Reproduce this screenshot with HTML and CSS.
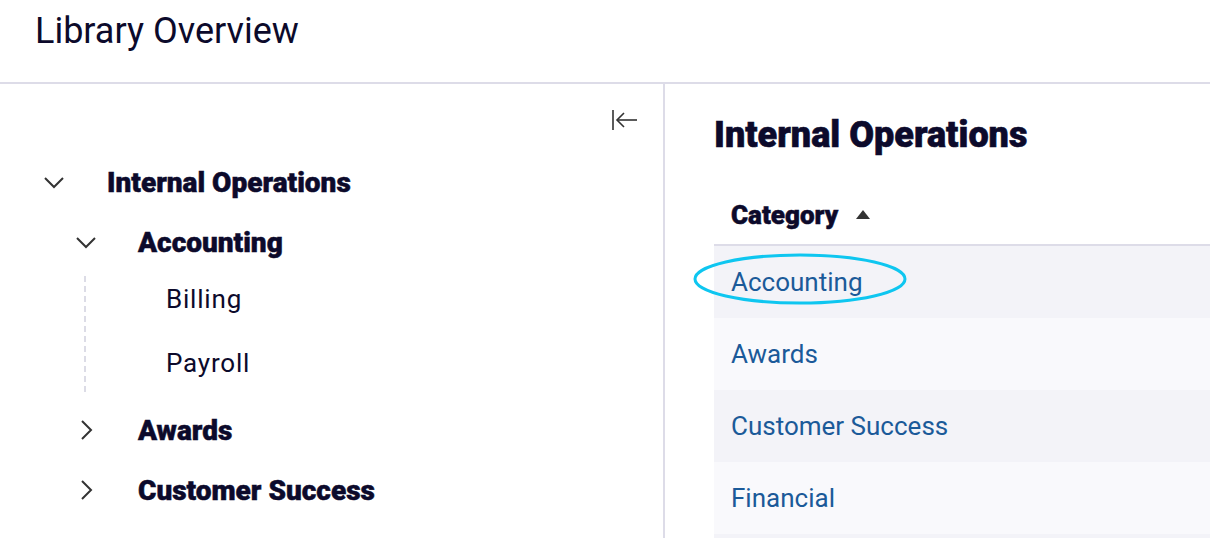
FILE: index.html
```html
<!DOCTYPE html>
<html lang="en">
<head>
  <meta charset="UTF-8" />
  <meta name="viewport" content="width=device-width, initial-scale=1.0" />
  <title>Library Overview</title>
  <link rel="stylesheet" href="styles.css">
</head>
<body>

<header class="page-header">
  <h1>Library Overview</h1>
</header>

<main class="layout">
  <aside class="sidebar">
    <div class="sidebar-tools">
      <button class="icon-btn" title="Collapse">
        <svg width="28" height="24" viewBox="0 0 28 24" fill="none" stroke="#333" stroke-width="1.6">
          <path d="M2 2v20" />
          <path d="M26 12H6" />
          <path d="M13 5l-7 7 7 7" />
        </svg>
      </button>
    </div>

    <ul class="tree">
      <li>
        <div class="tree-row level-0">
          <span class="chevron">
            <svg width="24" height="24" viewBox="0 0 24 24" fill="none" stroke="#333" stroke-width="2"><path d="M3 8l9 9 9-9" /></svg>
          </span>
          <span class="tree-label">Internal Operations</span>
        </div>
        <ul class="tree-children">
          <li>
            <div class="tree-row">
              <span class="chevron">
                <svg width="24" height="24" viewBox="0 0 24 24" fill="none" stroke="#333" stroke-width="2"><path d="M3 8l9 9 9-9" /></svg>
              </span>
              <span class="tree-label">Accounting</span>
            </div>
            <ul class="tree-leaves">
              <li class="leaf">Billing</li>
              <li class="leaf">Payroll</li>
            </ul>
          </li>
          <li>
            <div class="tree-row">
              <span class="chevron">
                <svg width="24" height="24" viewBox="0 0 24 24" fill="none" stroke="#333" stroke-width="2"><path d="M8 3l9 9-9 9" /></svg>
              </span>
              <span class="tree-label">Awards</span>
            </div>
          </li>
          <li>
            <div class="tree-row">
              <span class="chevron">
                <svg width="24" height="24" viewBox="0 0 24 24" fill="none" stroke="#333" stroke-width="2"><path d="M8 3l9 9-9 9" /></svg>
              </span>
              <span class="tree-label">Customer Success</span>
            </div>
          </li>
        </ul>
      </li>
    </ul>
  </aside>

  <section class="content">
    <h2>Internal Operations</h2>
    <div class="table">
      <div class="table-head">
        <span>Category</span>
        <span class="sort-arrow"></span>
      </div>
      <div class="table-row"><a href="#">Accounting</a></div>
      <div class="table-row"><a href="#">Awards</a></div>
      <div class="table-row"><a href="#">Customer Success</a></div>
      <div class="table-row"><a href="#">Financial</a></div>
      <div class="table-row"></div>

      <!-- annotation circle -->
      <svg class="highlight" width="216" height="56" viewBox="0 0 216 56">
        <ellipse cx="108" cy="28" rx="105" ry="24" fill="none" stroke="#0ec6f0" stroke-width="3" />
      </svg>
    </div>
  </section>
</main>

</body>
</html>
```

FILE: styles.css
```css
:root {
  --ink: #0c0a2b;
  --link: #1b5a99;
  --line: #dddce8;
  --row-a: #f3f3f8;
  --row-b: #f9f9fc;
}

* {
  margin: 0;
  padding: 0;
  box-sizing: border-box;
}

body {
  font-family: Roboto, "Liberation Sans", sans-serif;
  color: var(--ink);
  background: #fff;
  overflow: hidden;
}

.page-header {
  height: 84px;
  border-bottom: 2px solid var(--line);
  padding: 10px 35px 0;
}

.page-header h1 {
  font-size: 36px;
  font-weight: 400;
  line-height: 42px;
}

.layout {
  display: flex;
  height: 454px;
}

.sidebar {
  width: 665px;
  flex-shrink: 0;
  border-right: 2px solid var(--line);
  padding-top: 24px;
}

.sidebar-tools {
  display: flex;
  justify-content: flex-end;
  padding-right: 24px;
  margin-bottom: 20px;
}

.icon-btn {
  border: none;
  background: none;
  width: 28px;
  height: 24px;
  display: flex;
  cursor: pointer;
}

.tree {
  list-style: none;
  padding-left: 42px;
}

.tree ul {
  list-style: none;
}

.tree-row {
  display: flex;
  align-items: center;
  height: 60px;
  gap: 41px;
}

.chevron {
  width: 24px;
  height: 24px;
  display: flex;
}

.tree-label {
  font-size: 28px;
  font-weight: 900;
  -webkit-text-stroke: 0.5px var(--ink);
}

.tree-children {
  padding-left: 32px;
}

.tree-children .tree-row {
  gap: 40px;
}

.tree-leaves {
  margin: -5px 0 5px;
  padding: 9px 0 0 92px;
  background: repeating-linear-gradient(to bottom, #dcdce6 0 6px, transparent 6px 10px) 10px 9px / 2px 127px no-repeat;
}

.leaf {
  height: 64px;
  display: flex;
  align-items: center;
  font-size: 26px;
  letter-spacing: 0.8px;
  margin-top: -9px;
}

.leaf + .leaf {
  margin-top: 0;
}

.content {
  flex: 1;
  padding: 30px 0 0 49px;
  min-width: 0;
}

.content h2 {
  font-size: 36px;
  font-weight: 900;
  line-height: 42px;
  margin-bottom: 32px;
  -webkit-text-stroke: 0.6px var(--ink);
}

.table {
  position: relative;
}

.table-head {
  height: 58px;
  border-bottom: 2px solid var(--line);
  display: flex;
  align-items: center;
  gap: 18px;
  padding-left: 17px;
  padding-bottom: 2px;
  font-size: 26px;
  font-weight: 900;
  -webkit-text-stroke: 0.5px var(--ink);
}

.sort-arrow {
  width: 0;
  height: 0;
  border-left: 7px solid transparent;
  border-right: 7px solid transparent;
  border-bottom: 9px solid #333;
  margin-top: -2px;
}

.table-row {
  height: 72px;
  display: flex;
  align-items: center;
  padding-left: 17px;
  background: var(--row-a);
}

.table-row:nth-of-type(odd) {
  background: var(--row-b);
}

.table-row a {
  color: var(--link);
  text-decoration: none;
  font-size: 26px;
}

.highlight {
  position: absolute;
  left: -22px;
  top: 63px;
}
```
